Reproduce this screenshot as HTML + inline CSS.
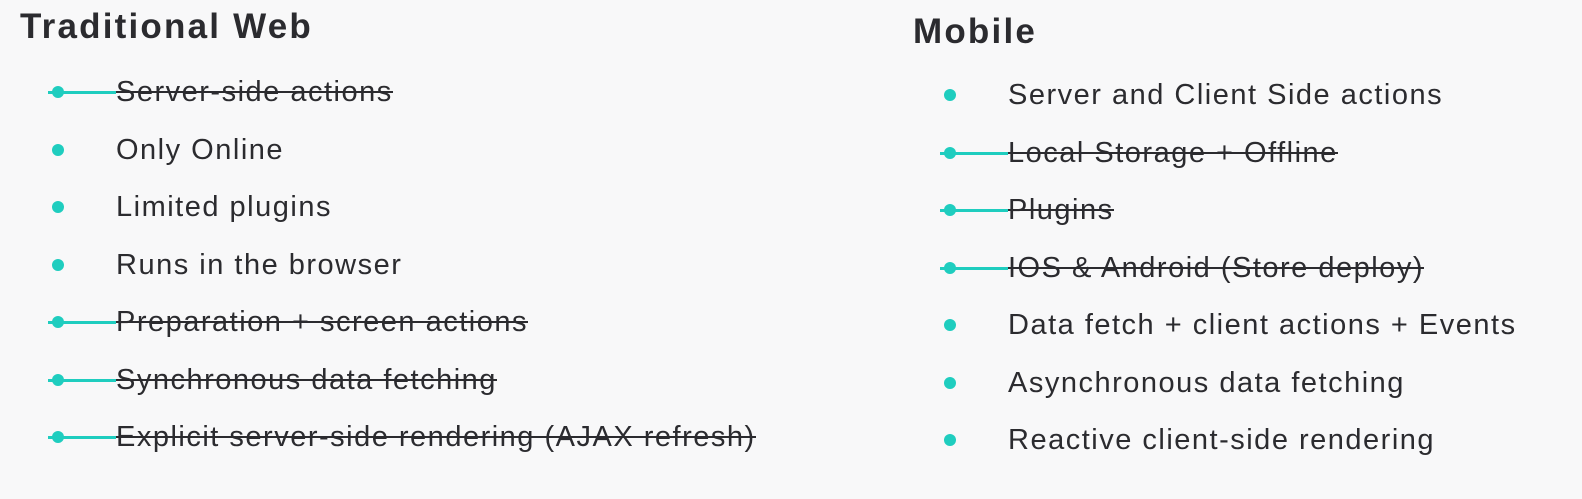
<!DOCTYPE html>
<html><head><meta charset="utf-8"><style>
html,body{margin:0;padding:0;background:#f8f8f9;width:1582px;height:499px;overflow:hidden;font-family:"Liberation Sans",Arial,sans-serif;color:#2b2b2f}
h1{position:absolute;margin:0;font-size:35px;font-weight:bold;line-height:40px;letter-spacing:2.2px}
.r{position:absolute;font-size:29px;line-height:40px;white-space:nowrap;letter-spacing:1.5px}
.d{position:absolute;width:12px;height:12px;border-radius:50%;background:#1fcdbf}
.s{position:absolute;height:2px;background:#2b2b2f}
.t{position:absolute;height:3px;background:#1fcdbf}
</style></head><body>
<h1 style="left:20px;top:7px">Traditional Web</h1>
<h1 style="left:913px;top:12px">Mobile</h1>
<div id="c"></div>
<script>
var L=[["Server-side actions",1],["Only Online",0],["Limited plugins",0],["Runs in the browser",0],["Preparation + screen actions",1],["Synchronous data fetching",1],["Explicit server-side rendering (AJAX refresh)",1]];
var R=[["Server and Client Side actions",0],["Local Storage + Offline",1],["Plugins",1],["IOS & Android (Store deploy)",1],["Data fetch + client actions + Events",0],["Asynchronous data fetching",0],["Reactive client-side rendering",0]];
var c=document.getElementById('c'),h='';
function col(a,bx,tx,y0){a.forEach(function(it,i){var y=y0+i*57.5;
h+='<div class="d" style="left:'+(bx-6)+'px;top:'+(y-6)+'px"></div>';
h+='<div class="r" id="'+bx+'_'+i+'" style="left:'+tx+'px;top:'+(y-20)+'px">'+it[0].replace('&','&amp;')+'</div>';
});}
col(L,58,116,92);col(R,950,1008,95);
c.innerHTML=h;
function strike(a,bx,tx,y0){a.forEach(function(it,i){if(!it[1])return;var y=y0+i*57.5;
var w=document.getElementById(bx+'_'+i).offsetWidth;
var e=document.createElement('div');e.className='t';e.style.cssText='left:'+(bx-10)+'px;top:'+(y-1)+'px;width:'+(tx-bx+10)+'px';c.appendChild(e);
e=document.createElement('div');e.className='s';e.style.cssText='left:'+tx+'px;top:'+(y-1)+'px;width:'+w+'px';c.appendChild(e);});}
strike(L,58,116,92);strike(R,950,1008,95);
</script>
</body></html>
